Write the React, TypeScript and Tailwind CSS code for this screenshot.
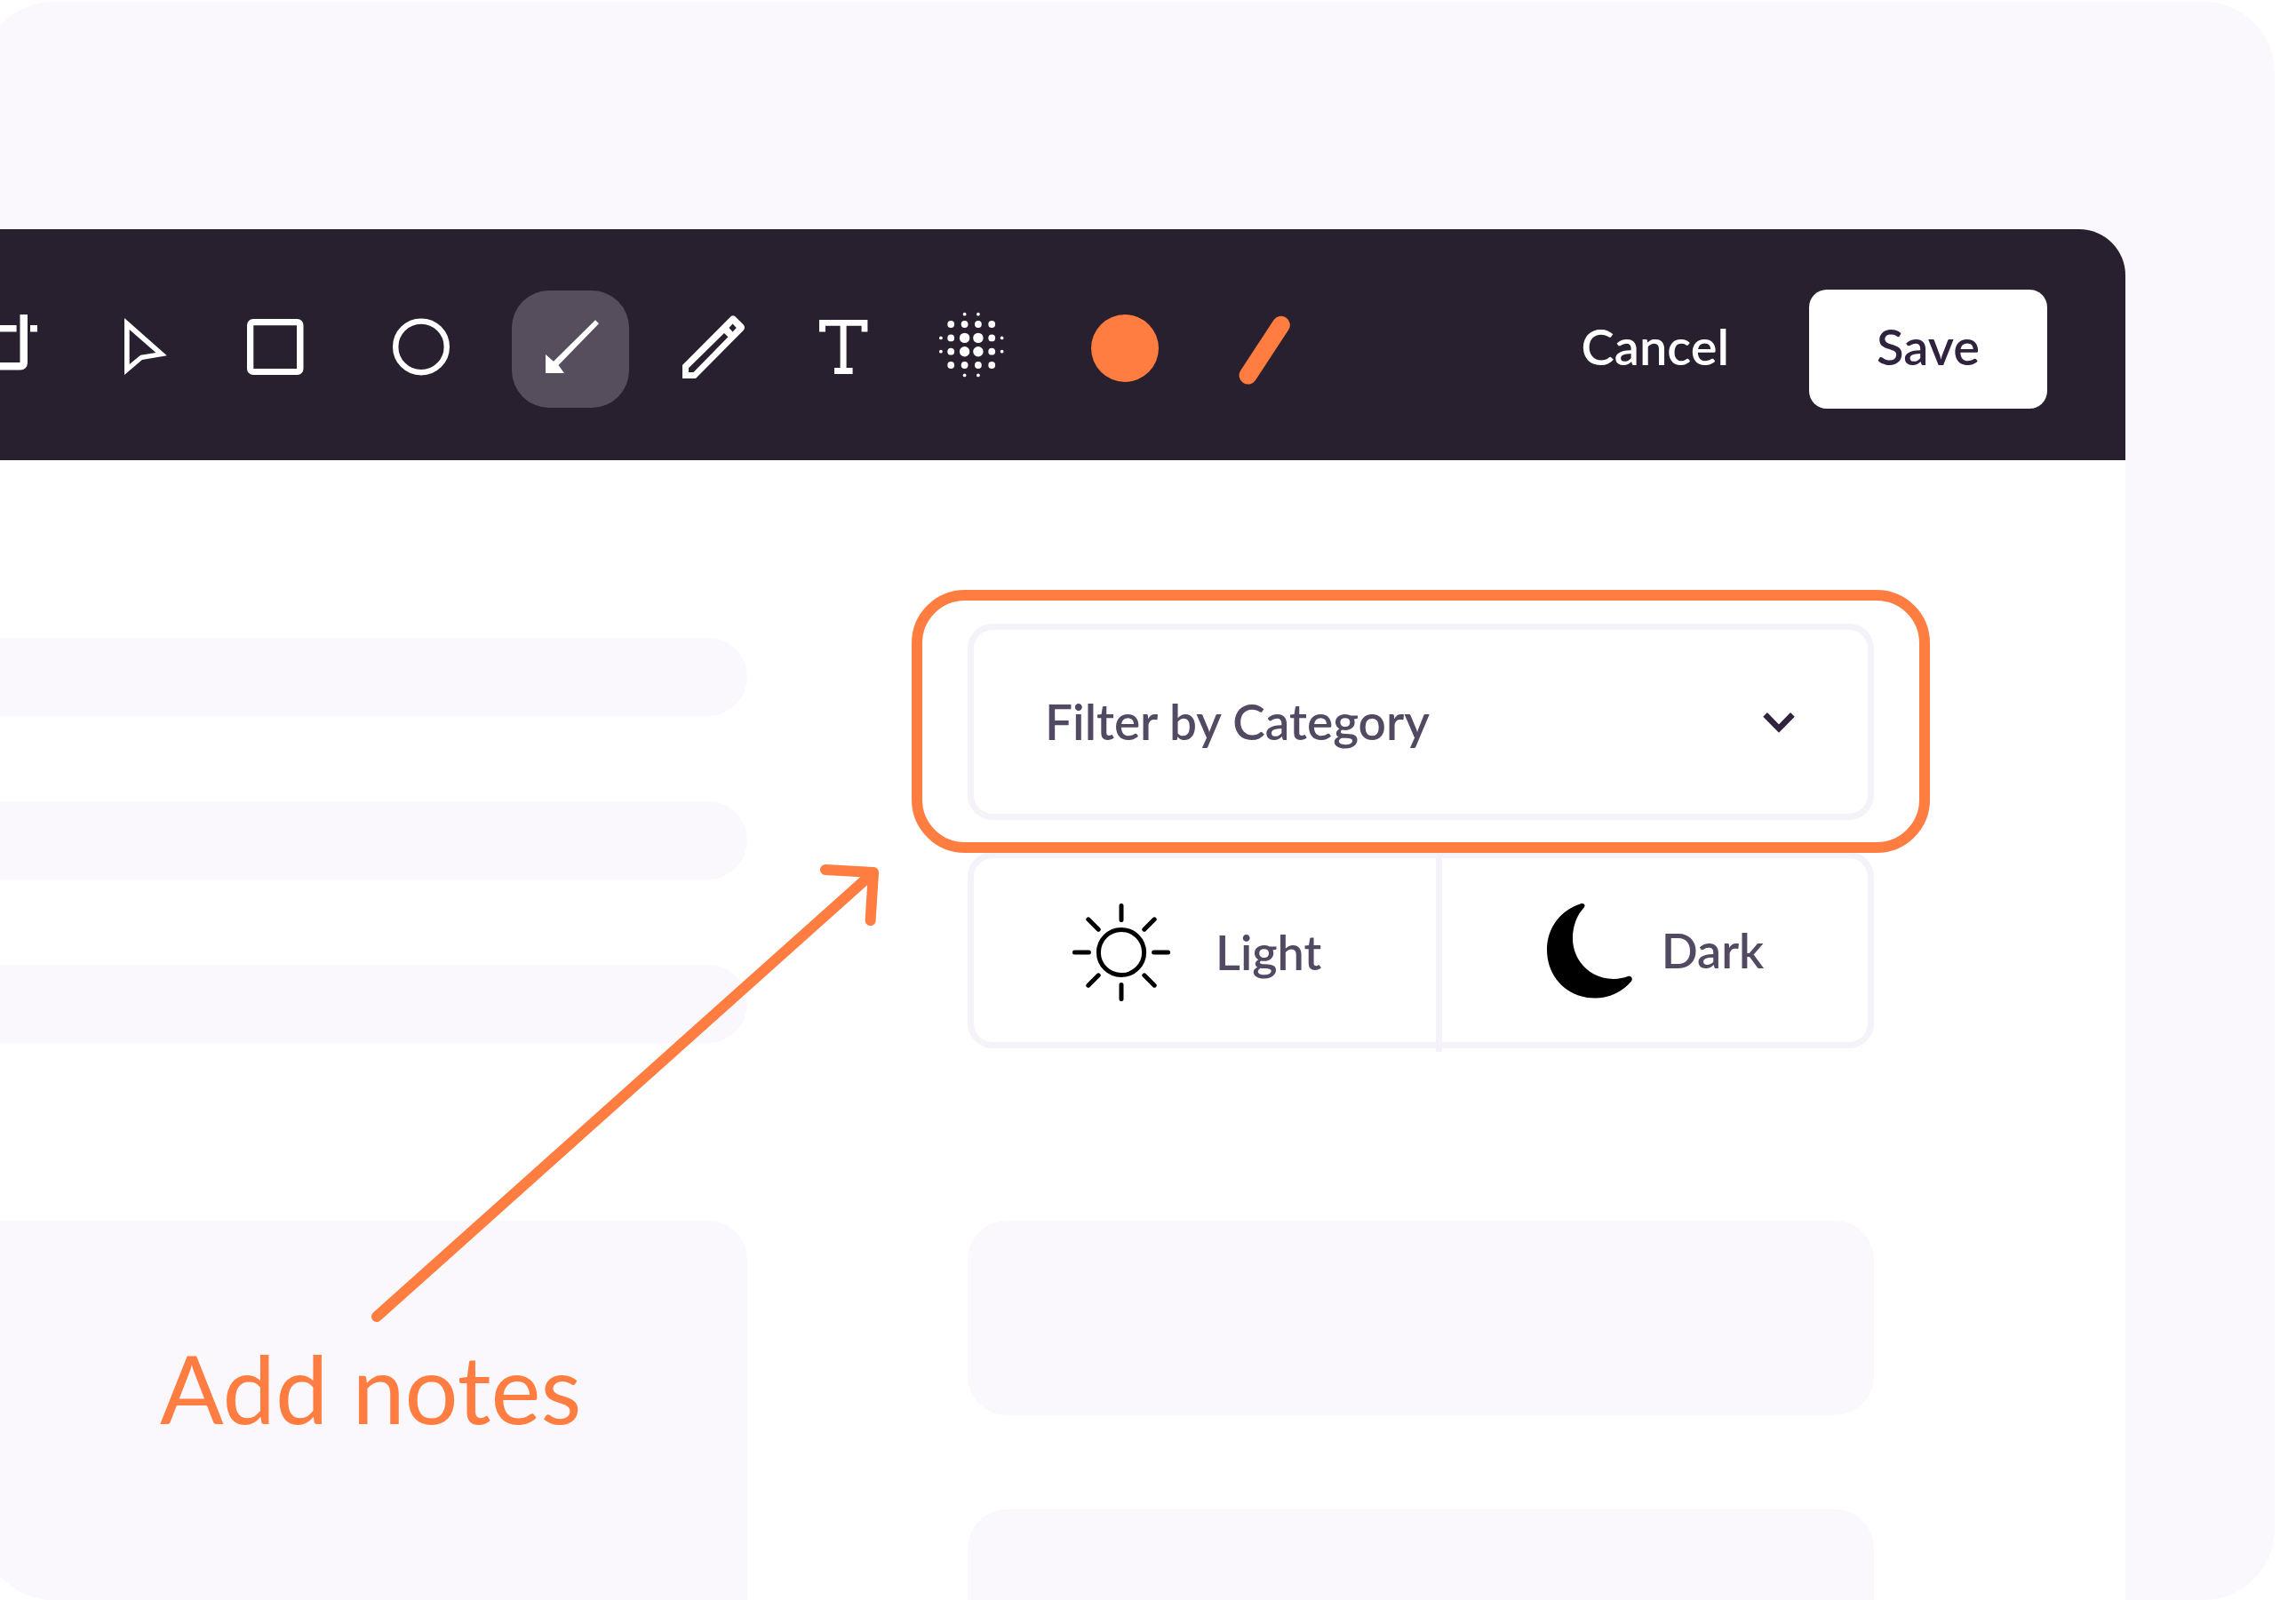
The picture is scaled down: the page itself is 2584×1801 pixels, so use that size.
import React, { useState } from "react";
import clsx from "clsx";

type Tool = {
  id: string;
  label: string;
  spacing: string;
  icon: React.ReactNode;
};

const CropIcon = () => (
  <svg width="42" height="80" viewBox="0 0 42 80" fill="currentColor">
    <path d="M22.5 1H31V55.6a8 8 0 0 1-8 8H0V55H22.5Z" />
    <path d="M0 13H18.6V20.6H0ZM34 13H42V20.6H34Z" />
  </svg>
);

const CursorIcon = () => (
  <svg width="48" height="80" viewBox="0 0 48 80" fill="currentColor">
    <path
      fillRule="evenodd"
      d="M0 5L47.8 47.3L20 52L0 69ZM5.7 18V57L18.2 46.7L35.4 44Z"
    />
  </svg>
);

const SquareIcon = () => (
  <svg width="64" height="80" viewBox="0 0 64 80" fill="currentColor">
    <path
      fillRule="evenodd"
      d="M7 6H56.5a7 7 0 0 1 7 7V62a7 7 0 0 1-7 7H7a7 7 0 0 1-7-7V13a7 7 0 0 1 7-7ZM7.3 13.2V62H56V13.2Z"
    />
  </svg>
);

const CircleIcon = () => (
  <svg width="64" height="80" viewBox="0 0 64 80" fill="none">
    <circle cx="32" cy="37.4" r="28.8" stroke="currentColor" strokeWidth="6.4" />
  </svg>
);

const ArrowIcon = () => (
  <svg width="60" height="80" viewBox="-2 0 60 80" fill="currentColor" overflow="visible">
    <path d="M0 46L9 53.7L56 7.3L60 11.3L14.5 58L21 67H0Z" />
  </svg>
);

const PencilIcon = () => (
  <svg width="70" height="80" viewBox="0 0 70 80" fill="currentColor">
    <path
      fillRule="evenodd"
      d="M0 73V58L54.5 3.2Q57 1.2 59.4 3.2L69 12.8Q71 15.6 69 18.4L15 73ZM7 66H12.5L51.4 26.2L47 22L7 61.3ZM56.6 11.6L52.4 16L56.6 20.4L60.8 16Z"
    />
  </svg>
);

const TextIcon = () => (
  <svg width="55" height="80" viewBox="0 0 55 80" fill="currentColor">
    <path d="M0 7H54.4V20.6H47.6V13.8H30.6V61H37.6V68H17V61H23.6V13.8H7V20.6H0Z" />
  </svg>
);

// Halftone grid, dots shrink towards the edge
const dotAxis = [1.9, 13.2, 28.6, 43.9, 59.2, 70.6];
const dotRadius = [
  [0, 0, 1.9, 1.9, 0, 0],
  [0, 3.9, 3.9, 3.9, 3.9, 0],
  [1.9, 3.9, 5.7, 5.7, 3.9, 1.9],
  [1.9, 3.9, 5.7, 5.7, 3.9, 1.9],
  [0, 3.9, 3.9, 3.9, 3.9, 0],
  [0, 0, 1.9, 1.9, 0, 0],
];

const BlurIcon = () => (
  <svg width="73" height="80" viewBox="0 0 73 80" fill="currentColor" overflow="visible">
    {dotRadius.map((row, y) =>
      row.map((r, x) =>
        r > 0 ? (
          <circle key={`${x}-${y}`} cx={dotAxis[x]} cy={dotAxis[y] - 1.2} r={r} />
        ) : null
      )
    )}
  </svg>
);

const ColorIcon = () => (
  <svg width="76" height="80" viewBox="0 0 76 80">
    <circle cx="38" cy="39" r="38" fill="#ff7d40" />
  </svg>
);

const StrokeIcon = () => (
  <svg width="58" height="80" viewBox="0 0 58 80">
    <path d="M47.8 12.8L10.6 69.6" stroke="#ff7d40" strokeWidth="20" strokeLinecap="round" />
  </svg>
);

const tools: Tool[] = [
  { id: "crop", label: "Crop", spacing: "ml-0", icon: <CropIcon /> },
  { id: "select", label: "Select", spacing: "ml-[98px]", icon: <CursorIcon /> },
  { id: "rectangle", label: "Rectangle", spacing: "ml-[90px]", icon: <SquareIcon /> },
  { id: "ellipse", label: "Ellipse", spacing: "ml-[100px]", icon: <CircleIcon /> },
  { id: "arrow", label: "Arrow", spacing: "ml-[70px]", icon: <ArrowIcon /> },
  { id: "pencil", label: "Pencil", spacing: "ml-[60px]", icon: <PencilIcon /> },
  { id: "text", label: "Text", spacing: "ml-[84px]", icon: <TextIcon /> },
  { id: "blur", label: "Blur", spacing: "ml-20", icon: <BlurIcon /> },
  { id: "color", label: "Color", spacing: "ml-[98px]", icon: <ColorIcon /> },
  { id: "stroke", label: "Stroke width", spacing: "ml-[90px]", icon: <StrokeIcon /> },
];

const Toolbar = () => {
  const [active, setActive] = useState("arrow");

  return (
    <header className="flex items-center justify-between rounded-tr-[52px] bg-[#281f2f] pt-[68px] pr-[88px] pb-[58px] text-white">
      <nav className="flex items-center" aria-label="Annotation tools">
        {tools.map((tool) => (
          <button
            key={tool.id}
            type="button"
            aria-label={tool.label}
            aria-pressed={active === tool.id}
            onClick={() => setActive(tool.id)}
            className={clsx(
              "flex shrink-0 items-center justify-center",
              tool.spacing,
              active === tool.id && "size-[132px] rounded-[42px] bg-[#574e5d]"
            )}
          >
            {tool.icon}
          </button>
        ))}
      </nav>

      <div className="flex items-center gap-[90px] text-[56px] leading-[64px] font-semibold">
        <button type="button" className="pb-1.5">
          Cancel
        </button>
        <button
          type="button"
          className="h-[134px] w-[268px] rounded-[20px] bg-white pb-1.5 text-[#30233f]"
        >
          Save
        </button>
      </div>
    </header>
  );
};

const SunIcon = () => (
  <svg width="112" height="112" viewBox="0 0 112 112" fill="none" stroke="#000" strokeLinecap="round">
    <circle cx="56" cy="56" r="25.6" strokeWidth="5" />
    <path
      d="M56 3.4V19.4M56 92.6V108.6M3.4 56H19.4M92.6 56H108.6M18.8 18.8L30.2 30.2M81.8 81.8L93.2 93.2M93.2 18.8L81.8 30.2M30.2 81.8L18.8 93.2"
      strokeWidth="5"
    />
  </svg>
);

const MoonIcon = () => (
  <svg width="98" height="108" viewBox="0 0 98 108" fill="#000">
    <path d="M39 1.2C43 0 45 3 42.4 6C34 15 29.6 28 30 42C31 66 50 86 76 86C82 86 87.5 84.6 92 83C96 82 98 85.4 96 88.4C86 100.5 71 107.4 55 107.4C24 107.4 1 84 1 53C1 28 17 8 39 1.2Z" />
  </svg>
);

const FilterSelect = () => (
  <div className="relative">
    <select
      aria-label="Filter by Category"
      className="h-[221px] w-full appearance-none rounded-[28px] border-[7px] border-[#f5f2f9] bg-white px-20 text-[55px] font-semibold text-[#524962]"
    >
      <option>Filter by Category</option>
    </select>
    <svg
      className="pointer-events-none absolute top-[98px] right-[89px]"
      width="36"
      height="25"
      viewBox="0 0 36 25"
      fill="none"
    >
      <path d="M2.6 4.4L18 20L33.4 4.4" stroke="#30233f" strokeWidth="6.6" />
    </svg>

    {/* Hand-placed highlight and the arrow pointing at it */}
    <div className="pointer-events-none absolute -inset-x-[63px] -top-[38px] -bottom-[37px] rounded-[60px] border-[12px] border-[#ff7d40]" />
    <svg
      className="pointer-events-none absolute top-[268px] right-full mr-[99px]"
      width="574"
      height="522"
      viewBox="0 0 574 522"
      fill="none"
      stroke="#ff7d40"
      strokeWidth="12"
      strokeLinecap="round"
      strokeLinejoin="round"
    >
      <path d="M8 512L567 12M513 9L567 12L563.6 66" />
    </svg>
  </div>
);

const ThemeToggle = () => {
  const [theme, setTheme] = useState("light");

  return (
    <div className="mt-9 flex h-[221px] rounded-[28px] border-[7px] border-[#f5f2f9] text-[54px] leading-[64px] font-semibold text-[#524962]">
      <button
        type="button"
        aria-pressed={theme === "light"}
        onClick={() => setTheme("light")}
        className="flex w-[520px] items-center gap-[50px] pt-1 pl-[110px]"
      >
        <SunIcon />
        Light
      </button>
      {/* The divider runs a little past the bottom border */}
      <div className="-mb-[11px] w-[7px] bg-[#f5f2f9]" />
      <button
        type="button"
        aria-pressed={theme === "dark"}
        onClick={() => setTheme("dark")}
        className="flex flex-1 items-center justify-center gap-8"
      >
        <MoonIcon />
        Dark
      </button>
    </div>
  );
};

const App = () => {
  return (
    <div className="flex min-h-screen flex-col overflow-hidden bg-white pt-0.5 pr-6 font-['Lato',sans-serif]">
      <div className="-ml-5 flex flex-1 flex-col overflow-hidden rounded-[80px] bg-[#faf8fd] pt-64 pr-[168px] pl-5">
        <Toolbar />

        <main className="flex flex-1 gap-[248px] bg-white pr-[283px]">
          <section className="flex flex-1 flex-col pt-[200px]">
            <div className="flex flex-col gap-24">
              <div className="h-[88px] rounded-r-[44px] bg-[#faf8fd]" />
              <div className="h-[88px] rounded-r-[44px] bg-[#faf8fd]" />
              <div className="h-[88px] rounded-r-[44px] bg-[#faf8fd]" />
            </div>
            <div className="mt-[200px] flex-1 rounded-tr-[44px] bg-[#faf8fd] pt-[124px] pl-[180px]">
              <p className="text-[106px] leading-[128px] text-[#ff7d40]">Add notes</p>
            </div>
          </section>

          <aside className="flex w-[1020px] flex-col pt-[184px]">
            <FilterSelect />
            <ThemeToggle />
            <div className="mt-[194px] h-[219px] rounded-[44px] bg-[#faf8fd]" />
            <div className="mt-[106px] flex-1 rounded-t-[44px] bg-[#faf8fd]" />
          </aside>
        </main>
      </div>
    </div>
  );
};

export default App;
